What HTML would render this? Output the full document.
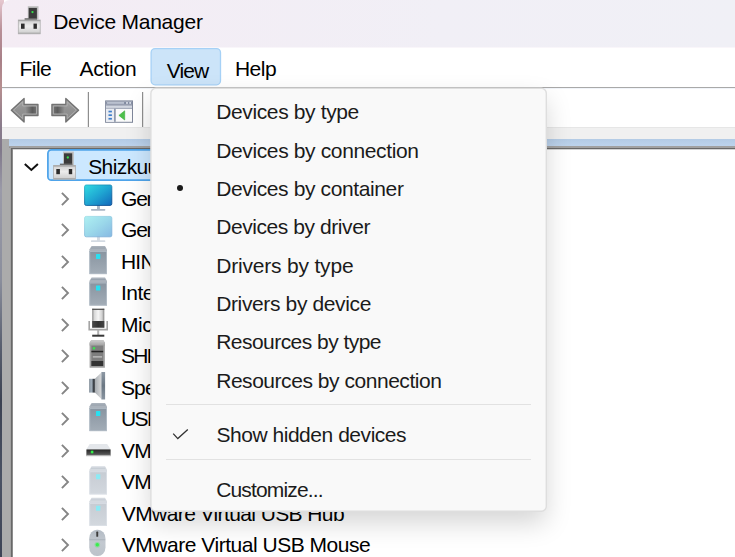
<!DOCTYPE html>
<html><head><meta charset="utf-8"><title>Device Manager</title><style>
html,body{margin:0;padding:0}
body{width:735px;height:557px;overflow:hidden;position:relative;background:#fff;font-family:"Liberation Sans",sans-serif;color:#000}
.a{position:absolute}
.t{position:absolute;white-space:nowrap;line-height:normal;color:#000;letter-spacing:-0.3px}
svg{position:absolute;overflow:visible}
</style></head><body>
<div class="a" style="left:0;top:0;width:4px;height:557px;background:linear-gradient(#e6c8d0 0,#b89098 30px,#a88088 60px,#b68f90 88px,#8a7c8c 125px,#80788a 150px,#9a9aa8 190px,#8a8e9c 280px,#5a6070 345px,#3c4252 400px,#4a5264 480px,#3e4456 557px)"></div>
<div class="a" style="left:2px;top:0;width:733px;height:47px;background:linear-gradient(90deg,#f4ecf4,#f1eff6 60%,#f0f0f6);border-top-left-radius:8px"></div>
<div class="a" style="left:2px;top:47px;width:733px;height:40px;background:#fff"></div>
<div class="a" style="left:2px;top:47px;width:733px;height:1px;background:#f9f6fa"></div>
<div class="a" style="left:2px;top:87px;width:733px;height:1px;background:#a9a9a9"></div><div class="a" style="left:2px;top:88px;width:733px;height:1px;background:#f1f4f9"></div>
<div class="a" style="left:2px;top:89px;width:733px;height:38px;background:#fff"></div>
<div class="a" style="left:2px;top:127px;width:733px;height:1px;background:#e6e6e6"></div>
<div class="a" style="left:2px;top:128px;width:733px;height:11px;background:#f0f0f0"></div>
<div class="a" style="left:2px;top:139px;width:733px;height:418px;background:#ababab"></div>
<div class="a" style="left:9px;top:139px;width:726px;height:7px;background:linear-gradient(#b3cbe5,#bdd3ec)"></div>
<div class="a" style="left:9px;top:146px;width:726px;height:2px;background:linear-gradient(#a8a8a8,#8c8c8c)"></div>
<div class="a" style="left:10px;top:147px;width:725px;height:410px;background:#a2a2a2"></div>
<div class="a" style="left:11px;top:148px;width:724px;height:409px;background:#686868"></div>
<div class="a" style="left:12px;top:149px;width:723px;height:408px;background:#8c8c8c"></div>
<div class="a" style="left:13px;top:149px;width:722px;height:408px;background:#d4d4d4"></div>
<div class="a" style="left:13px;top:150px;width:722px;height:407px;background:#fff"></div>
<div class="t " style="left:53.2px;top:9.9px;font-size:21px;letter-spacing:-0.247px;">Device Manager</div>
<div class="t " style="left:19.6px;top:56.6px;font-size:21px;letter-spacing:-0.553px;">File</div>
<div class="t " style="left:79.4px;top:56.6px;font-size:21px;letter-spacing:-0.237px;">Action</div>
<svg class="a" style="left:0;top:0" width="735" height="140"><rect x="151.1" y="48.6" width="69.4" height="36.2" rx="4" fill="#cce4f9" stroke="#a6d1f6" stroke-width="1.3"/></svg>
<div class="t " style="left:166.8px;top:58.6px;font-size:21px;letter-spacing:-0.924px;">View</div>
<div class="t " style="left:234.9px;top:56.6px;font-size:21px;letter-spacing:-0.503px;">Help</div>
<svg class="a" style="left:0;top:0" width="735" height="200"><rect x="47.9" y="149.9" width="400" height="30.3" rx="3.5" fill="#cce8ff" stroke="#4fa4ea" stroke-width="1.75"/></svg>
<div class="t " style="left:88.2px;top:155.4px;font-size:21px;letter-spacing:-0.6px;">Shizkuu</div>
<svg style="left:23.9px;top:162.8px" width="15" height="9" viewBox="0 0 15 9"><path d="M0.8 1 L7.35 7 L13.9 1" fill="none" stroke="#111" stroke-width="2"/></svg>
<div class="t " style="left:121.0px;top:186.9px;font-size:21px;letter-spacing:-1.2px;">Generic</div>
<svg style="left:61px;top:191.8px" width="9" height="15" viewBox="0 0 9 15"><path d="M0.9 0.9 L7 7 L0.9 13.1" fill="none" stroke="#858585" stroke-width="1.9"/></svg>
<div class="t " style="left:121.0px;top:218.3px;font-size:21px;letter-spacing:-1.2px;">Generic</div>
<svg style="left:61px;top:223.2px" width="9" height="15" viewBox="0 0 9 15"><path d="M0.9 0.9 L7 7 L0.9 13.1" fill="none" stroke="#858585" stroke-width="1.9"/></svg>
<div class="t " style="left:121.0px;top:249.8px;font-size:21px;letter-spacing:-0.8px;">HINT</div>
<svg style="left:61px;top:254.7px" width="9" height="15" viewBox="0 0 9 15"><path d="M0.9 0.9 L7 7 L0.9 13.1" fill="none" stroke="#858585" stroke-width="1.9"/></svg>
<div class="t " style="left:121.0px;top:281.3px;font-size:21px;letter-spacing:-0.5px;">Intel</div>
<svg style="left:61px;top:286.2px" width="9" height="15" viewBox="0 0 9 15"><path d="M0.9 0.9 L7 7 L0.9 13.1" fill="none" stroke="#858585" stroke-width="1.9"/></svg>
<div class="t " style="left:121.0px;top:312.7px;font-size:21px;letter-spacing:-0.5px;">Microphone</div>
<svg style="left:61px;top:317.6px" width="9" height="15" viewBox="0 0 9 15"><path d="M0.9 0.9 L7 7 L0.9 13.1" fill="none" stroke="#858585" stroke-width="1.9"/></svg>
<div class="t " style="left:121.0px;top:344.2px;font-size:21px;letter-spacing:-1.8px;">SHIZKU</div>
<svg style="left:61px;top:349.1px" width="9" height="15" viewBox="0 0 9 15"><path d="M0.9 0.9 L7 7 L0.9 13.1" fill="none" stroke="#858585" stroke-width="1.9"/></svg>
<div class="t " style="left:121.0px;top:375.7px;font-size:21px;letter-spacing:-0.9px;">Speakers</div>
<svg style="left:61px;top:380.6px" width="9" height="15" viewBox="0 0 9 15"><path d="M0.9 0.9 L7 7 L0.9 13.1" fill="none" stroke="#858585" stroke-width="1.9"/></svg>
<div class="t " style="left:121.0px;top:407.2px;font-size:21px;letter-spacing:-1.6px;">USB</div>
<svg style="left:61px;top:412.1px" width="9" height="15" viewBox="0 0 9 15"><path d="M0.9 0.9 L7 7 L0.9 13.1" fill="none" stroke="#858585" stroke-width="1.9"/></svg>
<div class="t " style="left:121.0px;top:438.6px;font-size:21px;letter-spacing:-0.8px;">VMware</div>
<svg style="left:61px;top:443.5px" width="9" height="15" viewBox="0 0 9 15"><path d="M0.9 0.9 L7 7 L0.9 13.1" fill="none" stroke="#858585" stroke-width="1.9"/></svg>
<div class="t " style="left:121.0px;top:470.1px;font-size:21px;letter-spacing:-0.8px;">VMware</div>
<svg style="left:61px;top:475.0px" width="9" height="15" viewBox="0 0 9 15"><path d="M0.9 0.9 L7 7 L0.9 13.1" fill="none" stroke="#858585" stroke-width="1.9"/></svg>
<div class="t " style="left:121.8px;top:501.6px;font-size:21px;letter-spacing:-0.599px;">VMware Virtual USB Hub</div>
<svg style="left:61px;top:506.5px" width="9" height="15" viewBox="0 0 9 15"><path d="M0.9 0.9 L7 7 L0.9 13.1" fill="none" stroke="#858585" stroke-width="1.9"/></svg>
<div class="t " style="left:121.8px;top:533.0px;font-size:21px;letter-spacing:-0.478px;">VMware Virtual USB Mouse</div>
<svg style="left:61px;top:537.9px" width="9" height="15" viewBox="0 0 9 15"><path d="M0.9 0.9 L7 7 L0.9 13.1" fill="none" stroke="#858585" stroke-width="1.9"/></svg>
<svg class="a" style="left:0;top:0" width="735" height="557" viewBox="0 0 735 557">
<defs>
<linearGradient id="gpc" x1="0" y1="0" x2="0" y2="1"><stop offset="0" stop-color="#cfcfcf"/><stop offset="0.45" stop-color="#ececec"/><stop offset="1" stop-color="#cdcdcd"/></linearGradient>
<linearGradient id="gm" x1="0" y1="0" x2="1" y2="1"><stop offset="0" stop-color="#31dbe2"/><stop offset="0.5" stop-color="#1fa6d2"/><stop offset="1" stop-color="#1268bb"/></linearGradient>
<linearGradient id="gmf" x1="0" y1="0" x2="1" y2="1"><stop offset="0" stop-color="#aef0f2"/><stop offset="0.5" stop-color="#9bd8ea"/><stop offset="1" stop-color="#86b9e3"/></linearGradient>
<linearGradient id="gt" x1="0" y1="0" x2="0" y2="1"><stop offset="0" stop-color="#8894a0"/><stop offset="1" stop-color="#a3adb7"/></linearGradient>
<linearGradient id="gtf" x1="0" y1="0" x2="0" y2="1"><stop offset="0" stop-color="#c6ccd3"/><stop offset="1" stop-color="#d3d8de"/></linearGradient>
<linearGradient id="gmic" x1="0" y1="0" x2="1" y2="0"><stop offset="0" stop-color="#8a8a8a"/><stop offset="0.18" stop-color="#d8d8d8"/><stop offset="0.5" stop-color="#f6f6f6"/><stop offset="0.82" stop-color="#d0d0d0"/><stop offset="1" stop-color="#808080"/></linearGradient>
<linearGradient id="gmicd" x1="0" y1="0" x2="1" y2="0"><stop offset="0" stop-color="#4a4a4a"/><stop offset="0.5" stop-color="#333"/><stop offset="1" stop-color="#444"/></linearGradient>
<linearGradient id="gsl" x1="0" y1="0" x2="0" y2="1"><stop offset="0" stop-color="#cdcdcd"/><stop offset="1" stop-color="#a0a0a0"/></linearGradient>
<linearGradient id="gsp1" x1="0" y1="0" x2="1" y2="0"><stop offset="0" stop-color="#76838f"/><stop offset="0.35" stop-color="#a9b6c2"/><stop offset="0.6" stop-color="#6d7883"/><stop offset="0.75" stop-color="#3b4046"/><stop offset="1" stop-color="#4a4f55"/></linearGradient>
<linearGradient id="gsp2" x1="0" y1="0" x2="1" y2="0"><stop offset="0" stop-color="#a6abb0"/><stop offset="0.6" stop-color="#c4c7ca"/><stop offset="1" stop-color="#d6d7d8"/></linearGradient>
<linearGradient id="gsp3" x1="0" y1="0" x2="0" y2="1"><stop offset="0" stop-color="#8e99a5"/><stop offset="0.5" stop-color="#6b7783"/><stop offset="1" stop-color="#8a95a1"/></linearGradient>
<linearGradient id="gdr" x1="0" y1="0" x2="0" y2="1"><stop offset="0" stop-color="#262626"/><stop offset="1" stop-color="#595959"/></linearGradient>
<linearGradient id="gmo" x1="0" y1="0" x2="0" y2="1"><stop offset="0" stop-color="#b4bcc5"/><stop offset="0.5" stop-color="#c3c9d0"/><stop offset="1" stop-color="#bcc3ca"/></linearGradient>
<linearGradient id="gar" x1="0" y1="0" x2="0" y2="1"><stop offset="0" stop-color="#a4a4a4"/><stop offset="0.5" stop-color="#919191"/><stop offset="1" stop-color="#8a8a8a"/></linearGradient>
<linearGradient id="gar2" x1="0" y1="0" x2="1" y2="0"><stop offset="0" stop-color="#969696"/><stop offset="0.65" stop-color="#5c5c5c"/><stop offset="1" stop-color="#707070"/></linearGradient>
<linearGradient id="gms" x1="0" y1="0" x2="0.6" y2="1"><stop offset="0" stop-color="#27b4cc"/><stop offset="1" stop-color="#0d4f92"/></linearGradient>
<linearGradient id="gmfs" x1="0" y1="0" x2="0.6" y2="1"><stop offset="0" stop-color="#a4e2ea"/><stop offset="1" stop-color="#7fb0d8"/></linearGradient>
</defs>
<g transform="translate(17.6,6.2)">
<rect x="10.2" y="0" width="10.7" height="13.4" fill="#bdbdbd"/>
<rect x="11.1" y="1.7" width="8.2" height="11.7" fill="#3b3b3b"/>
<rect x="7" y="12" width="12.3" height="1.8" fill="#6e6e6e"/>
<circle cx="14.9" cy="5.9" r="1.15" fill="#35e04a"/>
<rect x="0.7" y="13.8" width="21.9" height="13.8" fill="url(#gpc)" stroke="#b0b0b0" stroke-width="0.8"/>
<rect x="0.7" y="13.8" width="21.9" height="1.2" fill="#a6a6a6"/>
<rect x="0.7" y="26.4" width="21.9" height="1.2" fill="#adadad"/>
<rect x="3.4" y="17.4" width="3.6" height="5.2" fill="#2c2c2c"/>
<rect x="15.9" y="17.4" width="3.4" height="5.2" fill="#2c2c2c"/>
</g>
<g transform="translate(10.7,97.6)"><path d="M0.6 12.6 L13.4 0.8 V6.9 H27.3 V17.9 H13.4 V24.4 Z" fill="url(#gar)" stroke="#727272" stroke-width="1.3" stroke-linejoin="round"/>
<path d="M14.2 8.6 H25.6 V16.2 H14.2 Z" fill="url(#gar2)"/>
<path d="M2.9 12.6 L12 4.2 V8.4 H25.8 V16.4 H12 V21 Z" fill="none" stroke="#b4b4b4" stroke-width="0.9" stroke-linejoin="round" opacity="0.85"/></g>
<g transform="translate(79.2,97.6) scale(-1,1)"><path d="M0.6 12.6 L13.4 0.8 V6.9 H27.3 V17.9 H13.4 V24.4 Z" fill="url(#gar)" stroke="#727272" stroke-width="1.3" stroke-linejoin="round"/>
<path d="M14.2 8.6 H25.6 V16.2 H14.2 Z" fill="url(#gar2)"/>
<path d="M2.9 12.6 L12 4.2 V8.4 H25.8 V16.4 H12 V21 Z" fill="none" stroke="#b4b4b4" stroke-width="0.9" stroke-linejoin="round" opacity="0.85"/></g>
<rect x="87.8" y="92" width="1.2" height="35" fill="#8e8e8e"/>
<rect x="142" y="92" width="1.2" height="35" fill="#8e8e8e"/>
<g transform="translate(105.1,100.4)">
<rect x="0.5" y="0.5" width="26.9" height="21.4" fill="#fbfbfb" stroke="#7f879a" stroke-width="1"/>
<rect x="1" y="1" width="25.9" height="3.4" fill="#808aa0"/>
<rect x="2" y="1.8" width="17" height="1.5" fill="#c9cfdb"/>
<rect x="21" y="1.6" width="1.8" height="1.9" fill="#d5dae4"/>
<rect x="24.2" y="1.6" width="1.8" height="1.9" fill="#d5dae4"/>
<rect x="1" y="4.4" width="25.9" height="1" fill="#8f98ab"/>
<rect x="1" y="5.4" width="25.9" height="2" fill="#d2d7e1"/>
<rect x="1" y="7.4" width="25.9" height="1" fill="#8f98ab"/>
<rect x="1" y="8.4" width="8" height="13" fill="#e9ecf2"/>
<rect x="9" y="8.4" width="1.6" height="13" fill="#8690a6"/>
<rect x="3.4" y="10.3" width="3.4" height="1.7" fill="#3f7fcb"/>
<rect x="3.4" y="13.9" width="3.4" height="1.7" fill="#3f7fcb"/>
<rect x="3.4" y="17.5" width="3.4" height="1.7" fill="#3f7fcb"/>
<path d="M13.8 15 L19.6 10.4 V19.6 Z" fill="#4cc04a" stroke="#3daa3c" stroke-width="0.6" stroke-linejoin="round"/>
</g>
<g transform="translate(52.9,151.6)">
<rect x="10.2" y="0" width="10.7" height="13.4" fill="#bdbdbd"/>
<rect x="11.1" y="1.7" width="8.2" height="11.7" fill="#3b3b3b"/>
<rect x="7" y="12" width="12.3" height="1.8" fill="#6e6e6e"/>
<circle cx="14.9" cy="5.9" r="1.15" fill="#35e04a"/>
<rect x="0.7" y="13.8" width="21.9" height="13.8" fill="url(#gpc)" stroke="#b0b0b0" stroke-width="0.8"/>
<rect x="0.7" y="13.8" width="21.9" height="1.2" fill="#a6a6a6"/>
<rect x="0.7" y="26.4" width="21.9" height="1.2" fill="#adadad"/>
<rect x="3.4" y="17.4" width="3.6" height="5.2" fill="#2c2c2c"/>
<rect x="15.9" y="17.4" width="3.4" height="5.2" fill="#2c2c2c"/>
</g>
<g transform="translate(84.2,184.6)">
<rect x="12.8" y="20" width="2.9" height="5" fill="#a9b5c4"/>
<rect x="6.8" y="24.3" width="14.3" height="1.8" rx="0.6" fill="#a9b5c4"/>
<rect x="0.4" y="0.4" width="27.2" height="20.4" rx="1.6" fill="url(#gm)" stroke="url(#gms)" stroke-width="0.9"/>
</g>
<g transform="translate(84.2,216.0)">
<rect x="12.8" y="20" width="2.9" height="5" fill="#d3dae2"/>
<rect x="6.8" y="24.3" width="14.3" height="1.8" rx="0.6" fill="#d3dae2"/>
<rect x="0.4" y="0.4" width="27.2" height="20.4" rx="1.6" fill="url(#gmf)" stroke="url(#gmfs)" stroke-width="0.9"/>
</g>
<g transform="translate(89.4,245.9)">
<path d="M2.2 0 H15.6 L17.6 3.6 V6 H0 V3.6 Z" fill="#aab2bb"/>
<rect x="1.6" y="1.6" width="14.4" height="1.1" fill="#98a2ad"/>
<rect x="0" y="5.2" width="17.6" height="23" fill="url(#gt)"/>
<rect x="0.4" y="5.6" width="16.8" height="22.2" fill="none" stroke="#b4bec8" stroke-width="0.8"/>
<rect x="6.6" y="8" width="4.3" height="5" rx="0.5" fill="#2adff0"/>
</g>
<g transform="translate(89.4,277.4)">
<path d="M2.2 0 H15.6 L17.6 3.6 V6 H0 V3.6 Z" fill="#aab2bb"/>
<rect x="1.6" y="1.6" width="14.4" height="1.1" fill="#98a2ad"/>
<rect x="0" y="5.2" width="17.6" height="23" fill="url(#gt)"/>
<rect x="0.4" y="5.6" width="16.8" height="22.2" fill="none" stroke="#b4bec8" stroke-width="0.8"/>
<rect x="6.6" y="8" width="4.3" height="5" rx="0.5" fill="#2adff0"/>
</g>
<g transform="translate(88.4,308.7)">
<path d="M0.8 12.2 V20.9 H18.8 V12.2" fill="none" stroke="#a4a4a4" stroke-width="1.6"/>
<rect x="8.8" y="21" width="2" height="5.4" fill="#b0b0b0"/>
<rect x="3.8" y="26" width="12.1" height="2" fill="#383838"/>
<rect x="3.8" y="0" width="12.1" height="19" fill="url(#gmic)"/>
<rect x="3.8" y="0" width="12.1" height="1.2" fill="#4a4a4a"/>
<rect x="3.8" y="12.3" width="12.1" height="6.7" fill="url(#gmicd)"/>
</g>
<g transform="translate(89.6,340.2)">
<path d="M1.6 0 H13.8 L15.3 2.6 V27.6 H0 V2.6 Z" fill="#a2a2a2"/>
<path d="M1.6 0 H13.8 L15.3 2.6 V5.4 H0 V2.6 Z" fill="url(#gsl)"/>
<rect x="1.8" y="5.4" width="11.8" height="20.6" fill="#7e7e7e"/>
<rect x="1.8" y="10.6" width="11.8" height="1.5" fill="#242424"/>
<rect x="3.2" y="15.8" width="9.3" height="1.7" fill="#b2b2b2"/>
<rect x="1.8" y="20.8" width="11.8" height="5" fill="#333"/>
<rect x="3.2" y="6.9" width="2.4" height="2.3" fill="#3de04f"/>
</g>
<g transform="translate(89.2,372.0)">
<rect x="0" y="6.8" width="5.8" height="13.8" fill="url(#gsp1)"/>
<path d="M5.7 6.8 L12.2 0.4 V27.1 L5.7 20.6 Z" fill="url(#gsp2)"/>
<rect x="12.2" y="0" width="3.7" height="27.5" fill="url(#gsp3)"/>
</g>
<g transform="translate(89.4,402.9)">
<path d="M2.2 0 H15.6 L17.6 3.6 V6 H0 V3.6 Z" fill="#aab2bb"/>
<rect x="1.6" y="1.6" width="14.4" height="1.1" fill="#98a2ad"/>
<rect x="0" y="5.2" width="17.6" height="23" fill="url(#gt)"/>
<rect x="0.4" y="5.6" width="16.8" height="22.2" fill="none" stroke="#b4bec8" stroke-width="0.8"/>
<rect x="6.6" y="8" width="4.3" height="5" rx="0.5" fill="#2adff0"/>
</g>
<g transform="translate(86.1,444.1)">
<path d="M3.6 0 H21 L24.8 5.6 H0 Z" fill="#e4e7eb"/>
<rect x="0" y="5.4" width="24.8" height="6.7" fill="#b4b4b4"/>
<rect x="0.5" y="5.4" width="23.8" height="5.4" fill="url(#gdr)"/>
<circle cx="6" cy="7.9" r="1.9" fill="#2fe043" opacity="0.35"/>
<circle cx="6" cy="7.9" r="1.2" fill="#35f04a"/>
</g>
<g transform="translate(89.4,466.2)">
<path d="M2.2 0 H15.6 L17.6 3.6 V6 H0 V3.6 Z" fill="#d5dae0"/>
<rect x="1.6" y="1.6" width="14.4" height="1.1" fill="#c6ccd4"/>
<rect x="0" y="5.2" width="17.6" height="23" fill="url(#gtf)"/>
<rect x="0.4" y="5.6" width="16.8" height="22.2" fill="none" stroke="#dde2e8" stroke-width="0.8"/>
<rect x="6.6" y="8" width="4.3" height="5" rx="0.5" fill="#8ceaf4"/>
</g>
<g transform="translate(89.4,497.7)">
<path d="M2.2 0 H15.6 L17.6 3.6 V6 H0 V3.6 Z" fill="#d5dae0"/>
<rect x="1.6" y="1.6" width="14.4" height="1.1" fill="#c6ccd4"/>
<rect x="0" y="5.2" width="17.6" height="23" fill="url(#gtf)"/>
<rect x="0.4" y="5.6" width="16.8" height="22.2" fill="none" stroke="#dde2e8" stroke-width="0.8"/>
<rect x="6.6" y="8" width="4.3" height="5" rx="0.5" fill="#8ceaf4"/>
</g>
<g transform="translate(89.2,529.8)">
<rect x="0" y="0" width="16.3" height="26.1" rx="7.6" ry="8.6" fill="url(#gmo)"/>
<rect x="0.3" y="9.5" width="15.7" height="0.9" fill="#a9b1ba"/>
<rect x="7.1" y="1.8" width="1.9" height="5.2" rx="0.6" fill="#3c3c3c"/>
<circle cx="8.1" cy="15" r="2.8" fill="#3cf050" opacity="0.35"/>
<circle cx="8.1" cy="15" r="1.7" fill="#38ee4c"/>
</g>
</svg>
<div class="a" style="left:151px;top:88px;width:395px;height:423px;background:#f9f9f9;border-radius:5px;box-shadow:0 12px 26px rgba(0,0,0,0.17)"></div><svg class="a" style="left:0;top:0" width="735" height="557"><rect x="150.9" y="88.2" width="395.4" height="423" rx="5" fill="#f9f9f9" stroke="#dedede" stroke-width="1.4"/></svg>
<div class="t " style="left:216.2px;top:100.4px;font-size:21px;color:#1b1b1b;letter-spacing:-0.368px;">Devices by type</div>
<div class="t " style="left:216.2px;top:138.7px;font-size:21px;color:#1b1b1b;letter-spacing:-0.367px;">Devices by connection</div>
<div class="t " style="left:216.2px;top:177.0px;font-size:21px;color:#1b1b1b;letter-spacing:-0.381px;">Devices by container</div>
<div class="t " style="left:216.2px;top:215.3px;font-size:21px;color:#1b1b1b;letter-spacing:-0.428px;">Devices by driver</div>
<div class="t " style="left:216.2px;top:253.6px;font-size:21px;color:#1b1b1b;letter-spacing:-0.19px;">Drivers by type</div>
<div class="t " style="left:216.2px;top:291.9px;font-size:21px;color:#1b1b1b;letter-spacing:-0.367px;">Drivers by device</div>
<div class="t " style="left:216.2px;top:330.2px;font-size:21px;color:#1b1b1b;letter-spacing:-0.54px;">Resources by type</div>
<div class="t " style="left:216.2px;top:368.5px;font-size:21px;color:#1b1b1b;letter-spacing:-0.46px;">Resources by connection</div>
<div class="t " style="left:216.4px;top:423.3px;font-size:21px;color:#1b1b1b;letter-spacing:-0.459px;">Show hidden devices</div>
<div class="t " style="left:216.2px;top:477.5px;font-size:21px;color:#1b1b1b;letter-spacing:-0.851px;">Customize...</div>
<div class="a" style="left:166px;top:404px;width:365px;height:1px;background:#e2e2e2"></div>
<div class="a" style="left:166px;top:459px;width:365px;height:1px;background:#e2e2e2"></div>
<div class="a" style="left:176.6px;top:185.1px;width:6.4px;height:6.4px;border-radius:50%;background:#1b1b1b"></div>
<svg style="left:173px;top:429px" width="16" height="11" viewBox="0 0 16 11"><path d="M0.2 4.6 L4.8 9.6 L14.8 0.4" fill="none" stroke="#333" stroke-width="1.3"/></svg>
</body></html>
